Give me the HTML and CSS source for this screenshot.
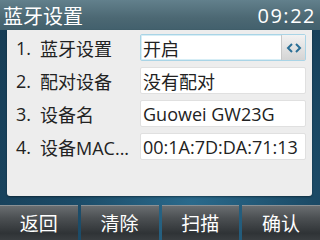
FILE: index.html
```html
<!DOCTYPE html>
<html lang="zh">
<head>
  <meta charset="UTF-8">
  <title>蓝牙设置</title>
  <link rel="stylesheet" href="styles.css">
</head>
<body>
  <div class="screen">
    <!-- Title bar -->
    <div class="titlebar">
      <span class="title">蓝牙设置</span>
      <span class="clock">09:22</span>
    </div>

    <!-- Settings list -->
    <div class="panel">
      <div class="row">
        <span class="num">1.</span>
        <span class="label">蓝牙设置</span>
        <div class="field focused">
          <span class="value">开启</span>
          <span class="switcher">
            <svg viewBox="0 0 16 10" width="16" height="10">
              <path d="M6 1 L2 5 L6 9 M10 1 L14 5 L10 9" fill="none" stroke="#2a6f96" stroke-width="2"/>
            </svg>
          </span>
        </div>
      </div>
      <div class="row">
        <span class="num">2.</span>
        <span class="label">配对设备</span>
        <div class="field"><span class="value">没有配对</span></div>
      </div>
      <div class="row">
        <span class="num">3.</span>
        <span class="label">设备名</span>
        <div class="field"><span class="value">Guowei GW23G</span></div>
      </div>
      <div class="row">
        <span class="num">4.</span>
        <span class="label">设备MAC...</span>
        <div class="field"><span class="value">00:1A:7D:DA:71:13</span></div>
      </div>
    </div>

    <!-- Soft keys -->
    <div class="softkeys">
      <div class="key">返回</div>
      <div class="key">清除</div>
      <div class="key">扫描</div>
      <div class="key">确认</div>
    </div>
  </div>
</body>
</html>
```

FILE: styles.css
```css
body {
  margin: 0;
  background: #000;
  font-family: "Open Sans", "Noto Sans CJK SC", sans-serif;
}
.screen {
  width: 320px;
  height: 240px;
  overflow: hidden;
  display: flex;
  flex-direction: column;
  background: radial-gradient(ellipse at 60% 85%, #2a6a8c 0%, #1b4a66 45%, #163a52 100%);
}

/* Title bar */
.titlebar {
  height: 30px;
  display: flex;
  justify-content: space-between;
  align-items: center;
  padding: 0 4px 0 3px;
  background: linear-gradient(#62808c, #4c6873 60%, #42606d);
  color: #fff;
  font-size: 20px;
}
.clock {
  letter-spacing: 1.5px;
}

/* List panel */
.panel {
  height: 166px;
  margin: 0 8px 0 7px;
  padding-top: 1px;
  box-sizing: border-box;
  background: #ededed;
  border-radius: 0 0 3px 3px;
  box-shadow: 0 1px 2px rgba(0, 0, 0, 0.4);
}
.row {
  height: 33px;
  display: flex;
  align-items: center;
  font-size: 18px;
  color: #222;
}
.num {
  width: 24px;
  padding-left: 9px;
}
.label {
  width: 100px;
  white-space: nowrap;
}
.field {
  width: 166px;
  height: 27px;
  box-sizing: border-box;
  display: flex;
  align-items: center;
  justify-content: space-between;
  background: #fff;
  border: 1px solid #e0e0e0;
  border-radius: 2px;
}
.field.focused {
  border-color: #a9d4e6;
  box-shadow: inset 0 0 0 1px #d7eef6;
}
.value {
  padding-left: 2px;
  white-space: nowrap;
}
.switcher {
  width: 23px;
  height: 25px;
  display: flex;
  align-items: center;
  justify-content: center;
  background: linear-gradient(#f2f2f2, #d4d4d4);
  border-left: 1px solid #c8c8c8;
}

/* Soft keys */
.softkeys {
  margin-top: 9px;
  flex: 1;
  display: grid;
  grid-template-columns: repeat(4, 1fr);
  gap: 3px;
}
.key {
  display: flex;
  align-items: center;
  justify-content: center;
  color: #fff;
  font-size: 19px;
  background: linear-gradient(#6a6e71 0%, #4c5053 35%, #2f3336 80%, #3a3e41 100%);
  border-top: 1px solid #8a9094;
}
```
